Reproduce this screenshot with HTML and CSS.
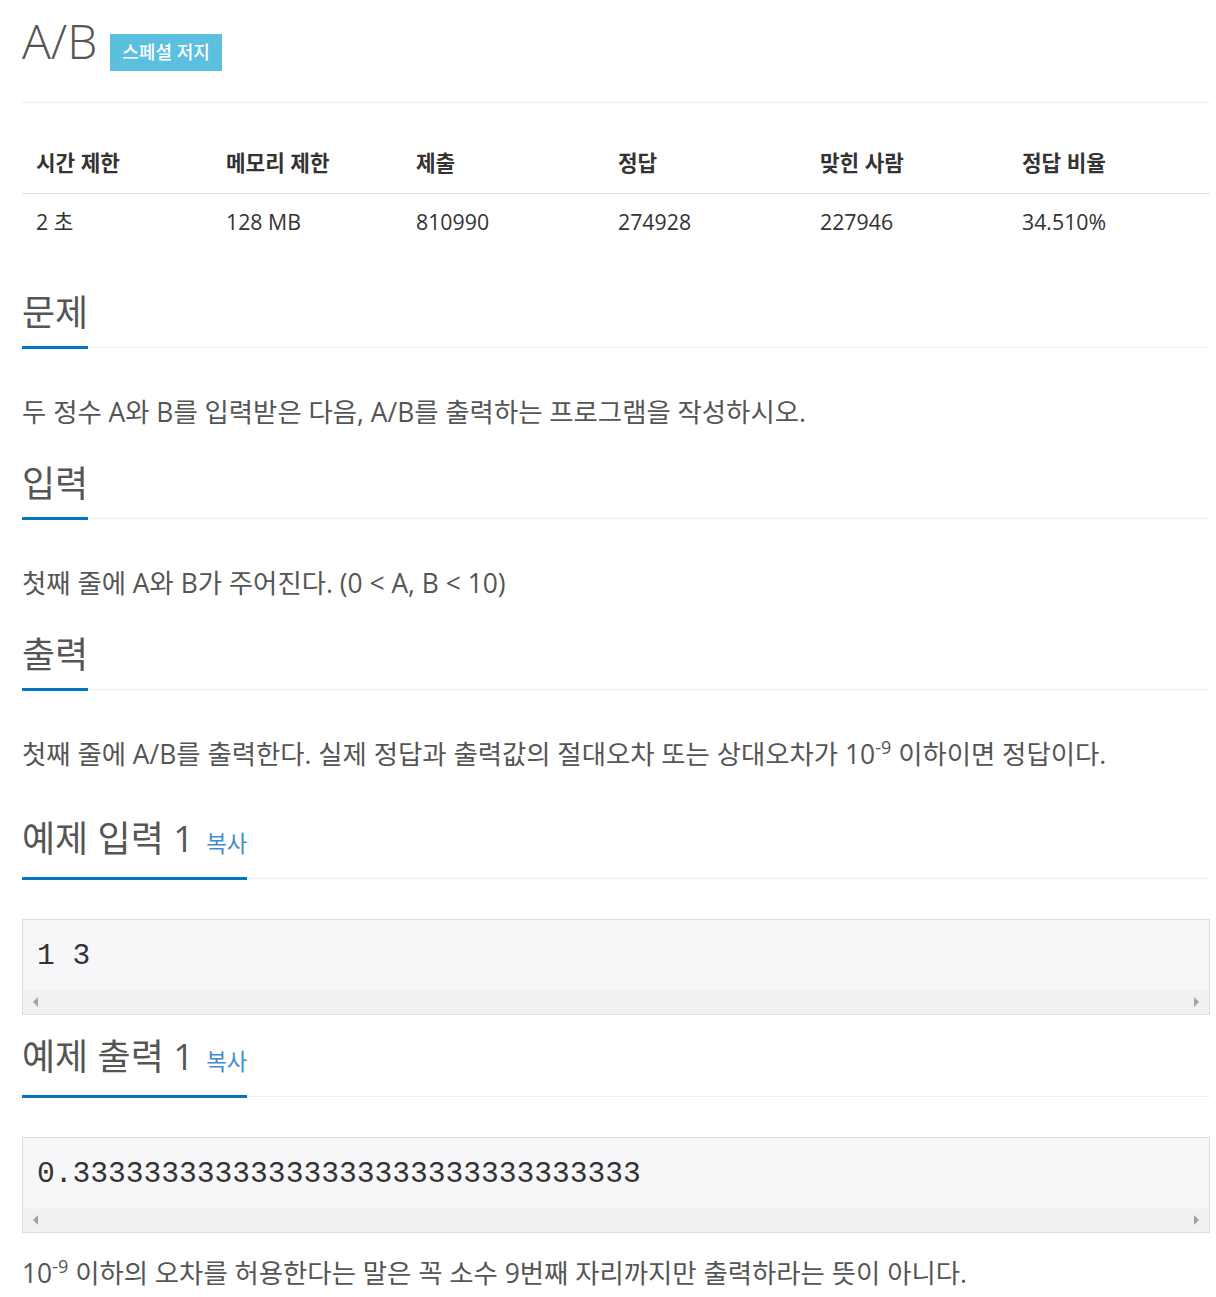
FILE: index.html
```html
<!DOCTYPE html>
<html lang="ko">
<head>
  <meta charset="UTF-8" />
  <title>A/B</title>
  <link rel="stylesheet" href="styles.css">
</head>
<body>

<div class="container">
  <div class="page-header">
    <h1 class="title">A/B</h1>
    <span class="label-special">스페셜 저지</span>
  </div>

  <div class="info-table">
    <div class="th">시간 제한</div>
    <div class="th">메모리 제한</div>
    <div class="th">제출</div>
    <div class="th">정답</div>
    <div class="th">맞힌 사람</div>
    <div class="th">정답 비율</div>
    <div class="td">2 초</div>
    <div class="td">128 MB</div>
    <div class="td">810990</div>
    <div class="td">274928</div>
    <div class="td">227946</div>
    <div class="td">34.510%</div>
  </div>

  <section class="problem-section">
    <div class="headline"><h2>문제</h2></div>
    <p>두 정수 A와 B를 입력받은 다음, A/B를 출력하는 프로그램을 작성하시오.</p>
  </section>

  <section class="problem-section">
    <div class="headline"><h2>입력</h2></div>
    <p>첫째 줄에 A와 B가 주어진다. (0 &lt; A, B &lt; 10)</p>
  </section>

  <section class="problem-section">
    <div class="headline"><h2>출력</h2></div>
    <p>첫째 줄에 A/B를 출력한다. 실제 정답과 출력값의 절대오차 또는 상대오차가 10<sup>-9</sup> 이하이면 정답이다.</p>
  </section>

  <section class="problem-section sample">
    <div class="headline"><h2>예제 입력 1 <a class="copy" href="#">복사</a></h2></div>
    <div class="sample-box">
      <pre>1 3</pre>
      <div class="hscroll"><span class="arrow left"></span><span class="arrow right"></span></div>
    </div>
  </section>

  <section class="problem-section sample-out">
    <div class="headline"><h2>예제 출력 1 <a class="copy" href="#">복사</a></h2></div>
    <div class="sample-box">
      <pre>0.33333333333333333333333333333333</pre>
      <div class="hscroll"><span class="arrow left"></span><span class="arrow right"></span></div>
    </div>
    <p class="note">10<sup>-9</sup> 이하의 오차를 허용한다는 말은 꼭 소수 9번째 자리까지만 출력하라는 뜻이 아니다.</p>
  </section>
</div>

</body>
</html>
```

FILE: styles.css
```css
body {
  margin: 0;
  font-family: 'Open Sans', 'Noto Sans CJK KR', sans-serif;
  color: #555;
  background: #fff;
}

.container {
  width: 1188px;
  margin-left: 22px;
}

.page-header {
  display: flex;
  align-items: flex-start;
  padding-top: 14px;
  padding-bottom: 31px;
  border-bottom: 1px solid #eee;
}

.title {
  margin: 0;
  font-size: 48px;
  font-weight: 300;
  line-height: 53px;
  color: #555;
}

.label-special {
  margin-left: 13px;
  margin-top: 20px;
  background: #5bc0de;
  color: #fff;
  font-size: 18px;
  font-weight: 500;
  line-height: 37px;
  padding: 0 12px;
}

.info-table {
  display: grid;
  grid-template-columns: 190px 190px 202px 202px 202px 202px;
  margin-top: 33px;
  color: #333;
  font-size: 21.3px;
  line-height: 26px;
}

.th {
  font-weight: bold;
  padding: 14px 14px 17px;
  border-bottom: 1px solid #ddd;
}

.td {
  padding: 15px 14px 13px;
}

.problem-section {
  margin-top: 45px;
}

.problem-section + .problem-section {
  margin-top: 33px;
}

.headline {
  display: flex;
  border-bottom: 1px dotted #ddd;
  margin-bottom: 45px;
}

.headline h2 {
  margin: 0 0 -2px;
  font-size: 36px;
  font-weight: normal;
  line-height: 35px;
  padding-top: 2px;
  padding-bottom: 16px;
  border-bottom: 3px solid #0076c0;
  color: #555;
}

.copy {
  font-size: 22.4px;
  color: #428bca;
  text-decoration: none;
  margin-left: 3px;
}

p {
  margin: 0;
  font-size: 26.4px;
  line-height: 38px;
}

sup {
  font-size: 18px;
  line-height: 0;
  vertical-align: 10px;
}

.problem-section.sample {
  margin-top: 46px;
}

.sample .headline,
.sample-out .headline {
  margin-bottom: 40px;
}

.problem-section.sample-out {
  margin-top: 22px;
}

.sample-box {
  border: 1px solid #dddde3;
  background: #f7f7f9;
}

.sample-box pre {
  margin: 0;
  padding: 15px 14px 13px;
  font-family: 'Liberation Mono', monospace;
  font-size: 29.6px;
  line-height: 42px;
  color: #333;
}

.hscroll {
  height: 24px;
  background: #f1f1f1;
  display: flex;
  align-items: center;
  justify-content: space-between;
  padding: 0 10px;
}

.arrow {
  width: 0;
  height: 0;
  border-top: 5px solid transparent;
  border-bottom: 5px solid transparent;
}

.arrow.left {
  border-right: 5px solid #a3a3a3;
}

.arrow.right {
  border-left: 5px solid #a3a3a3;
}

.note {
  margin-top: 21px;
}
```
